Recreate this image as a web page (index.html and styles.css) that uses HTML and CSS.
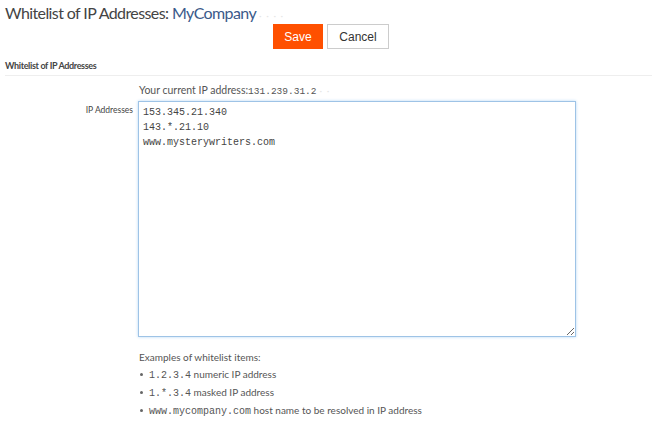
FILE: index.html
```html
<!DOCTYPE html>
<html>
<head>
<meta charset="utf-8">
<link rel="stylesheet" href="styles.css">
</head>
<body>
<div class="page">
  <h1 class="title">Whitelist of IP Addresses: <span class="company">MyCompany</span><span class="blur">&middot; &middot; &middot; &middot;</span></h1>
  <div class="actions">
    <button class="btn save">Save</button>
    <button class="btn cancel">Cancel</button>
  </div>
  <h2 class="section">Whitelist of IP Addresses</h2>
  <div class="row">
    <div class="label"></div>
    <div class="field current">Your current IP address:<span class="mono">131.239.31.2</span><span class="blur">&middot; &middot;</span></div>
  </div>
  <div class="row">
    <div class="label">IP Addresses</div>
    <div class="field">
      <textarea class="ips" spellcheck="false">153.345.21.340
143.*.21.10
www.mysterywriters.com</textarea>
    </div>
  </div>
  <div class="row">
    <div class="label"></div>
    <div class="field examples">
      <div class="ex-title">Examples of whitelist items:</div>
      <ul class="ex-list">
        <li><span class="mono">1.2.3.4</span> numeric IP address</li>
        <li><span class="mono">1.*.3.4</span> masked IP address</li>
        <li><span class="mono">www.mycompany.com</span> host name to be resolved in IP address</li>
      </ul>
    </div>
  </div>
</div>
</body>
</html>
```
FILE: styles.css
```css
* { box-sizing: border-box; }
html, body { margin: 0; padding: 0; background: #fff; }
body { font-family: Lato, "Open Sans", sans-serif; color: #555; }
.title {
  margin: 0;
  padding: 3px 0 0 5px;
  font-size: 16px;
  letter-spacing: -0.6px;
  font-weight: normal;
  color: #444;
  line-height: 20px;
  height: 24px;
}
.company { color: #3b5a8a; }
.blur { color: #e6e6e6; font-size: 10px; margin-left: 3px; letter-spacing: 1px; }
.actions {
  display: flex;
  justify-content: center;
  gap: 4px;
  padding-left: 10px;
  height: 25px;
}
.btn {
  font-family: "Liberation Sans", Arial, sans-serif;
  font-size: 12px;
  height: 25px;
  padding: 0;
  border-radius: 0;
  cursor: pointer;
}
.save {
  width: 50px;
  background: #ff5000;
  color: #fff;
  border: 1px solid #ff5000;
}
.cancel {
  width: 62px;
  background: #fff;
  color: #333;
  border: 1px solid #ccc;
}
.section {
  margin: 0 0 0 5px;
  padding: 10px 0 0 0;
  font-size: 9px;
  letter-spacing: -0.35px;
  font-weight: bold;
  color: #444;
  line-height: 13px;
  height: 27px;
  border-bottom: 1px solid #eee;
}
.row { display: flex; }
.label {
  width: 133px;
  flex: none;
  text-align: right;
  font-size: 8.5px;
  color: #444;
  padding-top: 4px;
}
.field { margin-left: 5px; }
.current {
  font-size: 10.5px;
  padding: 7px 0 0 1px;
  height: 25px;
  line-height: 14px;
}
.mono { font-family: "Liberation Mono", "DejaVu Sans Mono", monospace; font-size: 10px; }
.current .mono { font-size: 9.5px; }
.ips {
  display: block;
  width: 438px;
  height: 236px;
  margin: 0;
  padding: 3px 4px;
  font-family: "Liberation Mono", "DejaVu Sans Mono", monospace;
  font-size: 10px;
  line-height: 15px;
  color: #444;
  border: 1px solid #9ec3e6;
  box-shadow: 0 0 3px #b8d8f5;
  outline: none;
  resize: both;
}
.examples { padding: 13px 0 0 1px; font-size: 10px; }
.ex-title { line-height: 14px; margin-bottom: 1px; }
.ex-list { list-style: none; margin: 0; padding: 0; }
.ex-list li { height: 18px; line-height: 18px; position: relative; padding-left: 10px; }
.ex-list li .mono { line-height: 1; }
.ex-list li::before {
  content: "";
  position: absolute;
  left: 1px;
  top: 8px;
  width: 3px;
  height: 3px;
  border-radius: 50%;
  background: #666;
}
```
